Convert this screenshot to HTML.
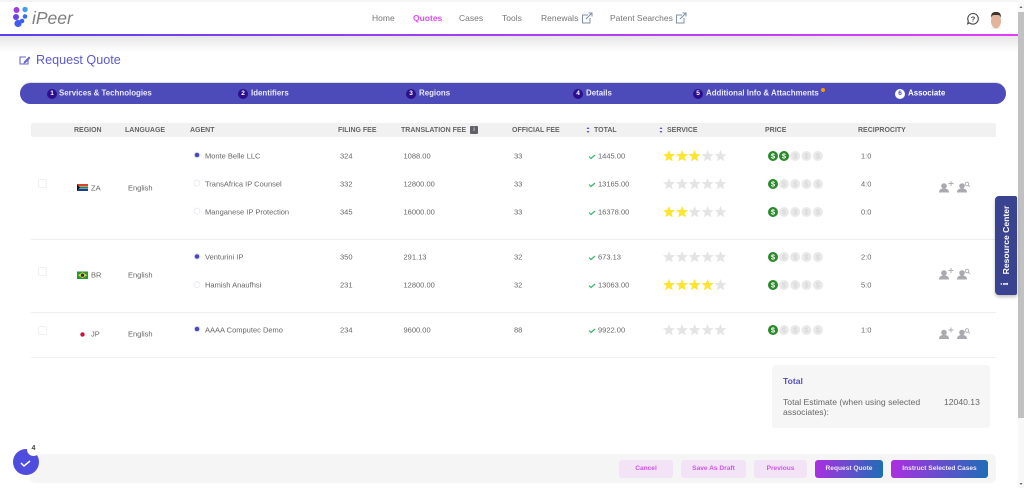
<!DOCTYPE html>
<html lang="en"><head><meta charset="utf-8"><title>iPeer - Request Quote</title>
<style>
html,body{margin:0;padding:0;width:1024px;height:488px;overflow:hidden;background:#fff}
#p{position:relative;width:1024px;height:488px;overflow:hidden;background:#fff;font-family:"Liberation Sans",sans-serif;color:#666;font-size:7.5px;filter:blur(.35px)}
#p div,#p span.t{position:absolute}
.t{white-space:nowrap;line-height:10px;transform:translateY(-4.3px)}
.n{font-size:8.5px;color:#777;transform:translateY(-5px)}
.h{font-size:7px;font-weight:bold;color:#666;transform:translateY(-4px)}
.s{font-size:7.9px;font-weight:bold;color:#e9e8f8;transform:translateY(-4.3px)}
.b{width:10px;height:10px;border-radius:50%;background:#2c0f8c;color:#fff;font-size:6.5px;font-weight:bold;line-height:10px;text-align:center;top:88.500px}
.btn{top:460px;height:18px;border-radius:3px;background:#f3e3f6;color:#cf55ee;font-size:6.6px;font-weight:bold;line-height:18.500px;text-align:center}
.g{background:linear-gradient(100deg,#ae2ee2,#1b6fb6);color:#f0e6fa}
.cb{left:38px;width:7px;height:7px;border:1px solid #f0f0f0;border-radius:2px;background:#fff}
.tt{font-size:8.6px;color:#666;transform:translateY(-5px)}
</style></head><body><div id="p">
<div style="left:0;top:0;width:1018px;height:2px;background:#f4f4f4"></div>
<div style="left:0;top:36px;width:1018px;height:16px;background:linear-gradient(#e6e6e6,#fff)"></div>
<div style="left:0;top:34px;width:1018px;height:2px;background:linear-gradient(90deg,#5a3ff0,#a040f0 45%,#e23ef8)"></div>

<span class="t" style="left:32px;top:18px;font-size:17.5px;line-height:20px;transform:translateY(-10px);color:#7d7d7d;font-style:italic">iPeer</span>
<span class="t n" style="left:372px;top:18px">Home</span>
<span class="t n" style="left:413px;top:18px;color:#d94df5;font-weight:bold">Quotes</span>
<span class="t n" style="left:459px;top:18px">Cases</span>
<span class="t n" style="left:502px;top:18px">Tools</span>
<span class="t n" style="left:541px;top:18px">Renewals</span>
<span class="t n" style="left:610px;top:18px">Patent Searches</span>

<span class="t" style="left:36px;top:60px;font-size:12.6px;line-height:16px;transform:translateY(-8px);color:#5d5ac8">Request Quote</span>

<div style="left:20px;top:83px;width:986px;height:21px;border-radius:11px;background:#4d4bb9;box-shadow:0 -1px 0 #ddd"></div>
<div class="b" style="left:47px">1</div><span class="t s" style="left:59px;top:93px">Services &amp; Technologies</span>
<div class="b" style="left:238px">2</div><span class="t s" style="left:251px;top:93px">Identifiers</span>
<div class="b" style="left:406px">3</div><span class="t s" style="left:419px;top:93px">Regions</span>
<div class="b" style="left:573px">4</div><span class="t s" style="left:586px;top:93px">Details</span>
<div class="b" style="left:693px">5</div><span class="t s" style="left:706px;top:93px">Additional Info &amp; Attachments</span>
<div style="left:821px;top:88px;width:4px;height:4px;border-radius:50%;background:#f90"></div>
<div class="b" style="left:895px;background:#fff;color:#4d4bb9">6</div><span class="t s" style="left:908px;top:93px;color:#fff">Associate</span>

<div style="left:31px;top:123px;width:965px;height:14px;background:#f1f1f1;border-radius:2px"></div>
<span class="t h" style="left:74px;top:130px">REGION</span>
<span class="t h" style="left:125px;top:130px">LANGUAGE</span>
<span class="t h" style="left:190px;top:130px">AGENT</span>
<span class="t h" style="left:338px;top:130px">FILING FEE</span>
<span class="t h" style="left:401px;top:130px">TRANSLATION FEE</span>
<div style="left:470px;top:126px;width:8px;height:8px;background:#5f6068;border-radius:1px;color:#fff;font-size:6px;line-height:8px;text-align:center">i</div>
<span class="t h" style="left:512px;top:130px">OFFICIAL FEE</span>
<span class="t h" style="left:594px;top:130px">TOTAL</span>
<span class="t h" style="left:667px;top:130px">SERVICE</span>
<span class="t h" style="left:765px;top:130px">PRICE</span>
<span class="t h" style="left:858px;top:130px">RECIPROCITY</span>

<div style="left:31px;top:239px;width:965px;height:1px;background:#efefef"></div>
<div style="left:31px;top:312px;width:965px;height:1px;background:#efefef"></div>
<div style="left:31px;top:357px;width:965px;height:1px;background:#efefef"></div>

<div class="cb" style="top:179px"></div><div class="cb" style="top:267px"></div><div class="cb" style="top:326px"></div>

<span class="t" style="left:91px;top:188px">ZA</span><span class="t" style="left:128px;top:188px">English</span>
<span class="t" style="left:91px;top:275px">BR</span><span class="t" style="left:128px;top:275px">English</span>
<span class="t" style="left:91px;top:334px">JP</span><span class="t" style="left:128px;top:334px">English</span>

<span class="t" style="left:205px;top:156px">Monte Belle LLC</span><span class="t" style="left:340px;top:156px">324</span><span class="t" style="left:403.500px;top:156px">1088.00</span><span class="t" style="left:514px;top:156px">33</span><span class="t" style="left:598px;top:156px">1445.00</span><span class="t" style="left:861px;top:156px">1:0</span>
<span class="t" style="left:205px;top:184px">TransAfrica IP Counsel</span><span class="t" style="left:340px;top:184px">332</span><span class="t" style="left:403.500px;top:184px">12800.00</span><span class="t" style="left:514px;top:184px">33</span><span class="t" style="left:598px;top:184px">13165.00</span><span class="t" style="left:861px;top:184px">4:0</span>
<span class="t" style="left:205px;top:212px">Manganese IP Protection</span><span class="t" style="left:340px;top:212px">345</span><span class="t" style="left:403.500px;top:212px">16000.00</span><span class="t" style="left:514px;top:212px">33</span><span class="t" style="left:598px;top:212px">16378.00</span><span class="t" style="left:861px;top:212px">0:0</span>
<span class="t" style="left:205px;top:257px">Venturini IP</span><span class="t" style="left:340px;top:257px">350</span><span class="t" style="left:403.500px;top:257px">291.13</span><span class="t" style="left:514px;top:257px">32</span><span class="t" style="left:598px;top:257px">673.13</span><span class="t" style="left:861px;top:257px">2:0</span>
<span class="t" style="left:205px;top:285px">Hamish Anaufhsi</span><span class="t" style="left:340px;top:285px">231</span><span class="t" style="left:403.500px;top:285px">12800.00</span><span class="t" style="left:514px;top:285px">32</span><span class="t" style="left:598px;top:285px">13063.00</span><span class="t" style="left:861px;top:285px">5:0</span>
<span class="t" style="left:205px;top:330px">AAAA Computec Demo</span><span class="t" style="left:340px;top:330px">234</span><span class="t" style="left:403.500px;top:330px">9600.00</span><span class="t" style="left:514px;top:330px">88</span><span class="t" style="left:598px;top:330px">9922.00</span><span class="t" style="left:861px;top:330px">1:0</span>

<div style="left:772px;top:365px;width:218px;height:63px;background:#f6f6f6;border-radius:3px"></div>
<span class="t tt" style="left:783px;top:381px;font-weight:bold;color:#5452c0">Total</span>
<span class="t tt" style="left:783px;top:402px">Total Estimate (when using selected</span>
<span class="t tt" style="left:783px;top:412px">associates):</span>
<span class="t tt" style="left:944px;top:402px">12040.13</span>

<div style="left:30px;top:454px;width:966px;height:29px;background:#f5f5f5;border-radius:5px"></div>
<div class="btn" style="left:619px;width:54px">Cancel</div>
<div class="btn" style="left:681px;width:65px">Save As Draft</div>
<div class="btn" style="left:754px;width:53px">Previous</div>
<div class="btn g" style="left:815px;width:68px">Request Quote</div>
<div class="btn g" style="left:891px;width:97px">Instruct Selected Cases</div>

<div style="left:13px;top:449px;width:26px;height:26px;border-radius:50%;background:#4f4ddd"></div>
<div style="left:27px;top:443px;width:13px;height:13px;border-radius:50%;background:#fff;color:#444;font-size:7px;font-weight:bold;line-height:12px;text-align:center">4</div>

<div style="left:1018px;top:0;width:6px;height:488px;background:#f8f8f8"></div>
<div style="left:1018px;top:12px;width:6px;height:406px;background:#c1c1c1"></div>

<div style="left:995px;top:196px;width:22px;height:99px;background:#3a438f;border-radius:4px 2px 2px 4px;box-shadow:0 2px 3px rgba(0,0,0,.25)"></div>
<span class="t" style="left:1006px;top:239.500px;font-size:8.6px;font-weight:bold;color:#fff;transform:translate(-50%,-50%) rotate(-90deg)">Resource Center</span>
<span class="t" style="left:1006px;top:284px;font-size:10px;font-weight:bold;color:#fff;font-family:'Liberation Serif',serif;transform:translate(-50%,-50%) rotate(-90deg)">i</span>

<svg width="1024" height="488" viewBox="0 0 1024 488" style="position:absolute;left:0;top:0;pointer-events:none">
<defs>
<polygon id="st" points="0,-6 1.600,-2 6,-1.800 2.600,1 3.700,5.300 0,3 -3.700,5.300 -2.600,1 -6,-1.800 -1.600,-2"/>
<g id="gs" fill="#e4e4e4"><use href="#st" x="669"/><use href="#st" x="682"/><use href="#st" x="694.600"/><use href="#st" x="707.600"/><use href="#st" x="720.500"/></g>
<g id="gc" fill="#e9e9e9"><circle cx="773" r="5"/><circle cx="784" r="5"/><circle cx="795.200" r="5"/><circle cx="806.500" r="5"/><circle cx="818" r="5"/></g>
<g id="ap" fill="#a9a9af"><circle cx="5" cy="3.500" r="2.800"/><path d="M0 10c0-3 2-4 5-4s5 1 5 4z"/></g>
<path id="ck" d="M0 1.500l2 2 4-3.500" fill="none" stroke="#3cb371" stroke-width="1.200"/>
</defs>
<!-- logo -->
<g>
<circle cx="16.500" cy="10" r="3" fill="#9b3fe0"/><circle cx="25" cy="9.500" r="2.700" fill="#3fa0f0"/>
<circle cx="16" cy="17" r="3" fill="#6a40e8"/><circle cx="25" cy="16.500" r="2.300" fill="#3a70f0"/>
<circle cx="22" cy="21" r="2.300" fill="#3a60ee"/><circle cx="18" cy="23.500" r="3.600" fill="#3e5cf0"/>
</g>
<!-- external links -->
<g fill="none" stroke="#7f8fa6" stroke-width="1"><path d="M588 15h-5.500v8h7.500v-5M586 19l6-6M588.500 13h3.500v3.500"/><path d="M682 15h-5.500v8h7.500v-5M680 19l6-6M682.500 13h3.500v3.500"/></g>
<!-- help -->
<path d="M973 13.500a5.300 5.300 0 1 1-3.500 9.300l-1.800 1 .6-2.700a5.300 5.300 0 0 1 4.700-7.600z" fill="none" stroke="#444" stroke-width="1.100"/>
<text x="973" y="21.500" font-size="7.500" font-weight="bold" text-anchor="middle" fill="#444" font-family="Liberation Sans">?</text>
<!-- avatar -->
<ellipse cx="996" cy="21" rx="5" ry="7.500" fill="#e2b49c"/><path d="M991 18c0-5 1.500-6 5-6s5 1 5 6c-1-3-2-3-5-3s-4 0-5 3z" fill="#3e322a"/><path d="M991.500 27q4.500 3 9 0v2h-9z" fill="#f3efe9"/>
<!-- pencil -->
<path d="M28 58.500v5.500h-8v-7h6" fill="none" stroke="#6a67cc" stroke-width="1.100"/><path d="M24 61.500l5-5 1.500 1.500-5 5-2 .5z" fill="#6a67cc"/>
<!-- sort -->
<path d="M586.500 129l1.500-2 1.500 2z M586.500 131l1.500 2 1.500-2z" fill="#5b57d0"/><path d="M659.500 129l1.500-2 1.500 2z M659.500 131l1.500 2 1.500-2z" fill="#5b57d0"/>
<!-- flags -->
<g><rect x="77" y="184" width="11" height="7" fill="#fff"/><rect x="77" y="184" width="11" height="2.300" fill="#d8442c"/><rect x="77" y="188.700" width="11" height="2.300" fill="#1b3c96"/><rect x="79" y="186.700" width="9" height="1.600" fill="#1f8a4c"/><path d="M77 184.500l3 3-3 3z" fill="#111"/></g>
<g><rect x="77" y="271.500" width="11" height="7.500" fill="#1f9a3a"/><path d="M82.500 272.300l4.500 2.900-4.500 2.900-4.500-2.900z" fill="#f4d81c"/><circle cx="82.500" cy="275.200" r="1.700" fill="#22307c"/></g>
<circle cx="82.500" cy="334.500" r="2.200" fill="#d0103a"/>
<!-- radios -->
<g fill="#fff" stroke="#e3e3f3" stroke-width=".7"><circle cx="197" cy="155" r="3"/><circle cx="197" cy="183" r="3"/><circle cx="197" cy="211" r="3"/><circle cx="197" cy="256.500" r="3"/><circle cx="197" cy="284.500" r="3"/><circle cx="197" cy="329" r="3"/></g>
<g fill="#4a45c8"><circle cx="197" cy="155" r="2.300"/><circle cx="197" cy="256.500" r="2.300"/><circle cx="197" cy="329" r="2.300"/></g>
<!-- checks -->
<use href="#ck" x="589" y="155"/><use href="#ck" x="589" y="183"/><use href="#ck" x="589" y="211"/><use href="#ck" x="589" y="256"/><use href="#ck" x="589" y="284"/><use href="#ck" x="589" y="329"/>
<!-- stars -->
<use href="#gs" y="156"/><use href="#gs" y="184"/><use href="#gs" y="212"/><use href="#gs" y="257"/><use href="#gs" y="285"/><use href="#gs" y="330"/>
<g fill="#ffe52e"><use href="#st" x="669" y="156"/><use href="#st" x="682" y="156"/><use href="#st" x="694.600" y="156"/><use href="#st" x="669" y="212"/><use href="#st" x="682" y="212"/><use href="#st" x="669" y="285"/><use href="#st" x="682" y="285"/><use href="#st" x="694.600" y="285"/><use href="#st" x="707.600" y="285"/></g>
<!-- coins -->
<use href="#gc" y="156"/><use href="#gc" y="184"/><use href="#gc" y="212"/><use href="#gc" y="257"/><use href="#gc" y="285"/><use href="#gc" y="330"/>
<g fill="#2b8a2b"><circle cx="773" cy="156" r="5"/><circle cx="784" cy="156" r="5"/><circle cx="773" cy="184" r="5"/><circle cx="773" cy="212" r="5"/><circle cx="773" cy="257" r="5"/><circle cx="773" cy="285" r="5"/><circle cx="773" cy="330" r="5"/></g>
<g font-family="Liberation Sans" font-size="7.500" font-weight="bold" text-anchor="middle" fill="#fff">
<text x="773 784" y="158.700">$$</text><text x="773" y="186.700">$</text><text x="773" y="214.700">$</text><text x="773" y="259.700">$</text><text x="773" y="287.700">$</text><text x="773" y="332.700">$</text></g>
<g font-family="Liberation Sans" font-size="7.500" font-weight="bold" text-anchor="middle" fill="#d8d8d8">
<text x="795.200 806.500 818" y="158.700">$$$</text><text x="784 795.200 806.500 818" y="186.700">$$$$</text><text x="784 795.200 806.500 818" y="214.700">$$$$</text><text x="784 795.200 806.500 818" y="259.700">$$$$</text><text x="784 795.200 806.500 818" y="287.700">$$$$</text><text x="784 795.200 806.500 818" y="332.700">$$$$</text></g>
<!-- person icons -->
<use href="#ap" x="939" y="182.500"/><use href="#ap" x="957" y="182.500"/><use href="#ap" x="939" y="269.500"/><use href="#ap" x="957" y="269.500"/><use href="#ap" x="939" y="329"/><use href="#ap" x="957" y="329"/>
<g fill="none" stroke="#a9a9af" stroke-width=".9"><path d="M951 181v5M948.500 183.500h5M951 268v5M948.500 270.500h5M951 327.500v5M948.500 330h5"/><circle cx="967" cy="184" r="1.800"/><path d="M968.300 185.300l1.500 1.500"/><circle cx="967" cy="271" r="1.800"/><path d="M968.300 272.300l1.500 1.500"/><circle cx="967" cy="330.500" r="1.800"/><path d="M968.300 331.800l1.500 1.500"/></g>
<!-- big check -->
<path d="M21 463l3 3 6-5" fill="none" stroke="#fff" stroke-width="1.500"/>
<!-- scrollbar arrows -->
<path d="M1019.500 8l1.500-2 1.500 2zM1019.500 483l1.500 2 1.500-2z" fill="#666"/>
</svg>
</div></body></html>
